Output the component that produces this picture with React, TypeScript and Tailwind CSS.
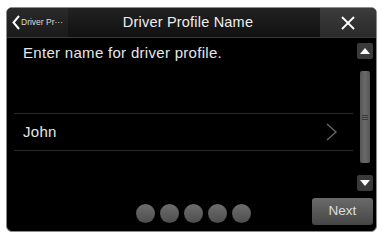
import { X } from "lucide-react";

function Triangle({ up }: { up?: boolean }) {
  return (
    <svg width="10" height="6" viewBox="0 0 10 6" className="block">
      {up ? <polygon points="0,6 10,6 5,0" fill="#fff" /> : <polygon points="0,0 10,0 5,6" fill="#fff" />}
    </svg>
  );
}

export default function App() {
  return (
    <div className="h-[234px] w-[382px] bg-white pl-[6px] pt-[7px] font-['Liberation_Sans',Arial,sans-serif]">
      <div className="flex h-[225px] w-[371px] flex-col overflow-hidden rounded-[6px] border border-[#8c8c8c] bg-black">
        {/* Header */}
        <div className="flex h-[30px] shrink-0 border-b border-[#3a3a3a] bg-gradient-to-b from-[#222] to-[#111]">
          <div className="flex w-[61px] items-center gap-[1px] bg-gradient-to-b from-[#2a2a2a] to-[#1a1a1a] pl-[5px]">
            <svg width="8" height="15" viewBox="0 0 8 15" className="shrink-0">
              <polyline points="7,1 1.5,7.5 7,14" fill="none" stroke="#fff" strokeWidth="2" />
            </svg>
            <span className="text-[8.5px] leading-none text-[#ddd]">Driver Pr···</span>
          </div>
          <div className="flex flex-1 items-center justify-center pr-[12px] text-[14.5px] tracking-[0.2px] text-[#eee]">
            Driver Profile Name
          </div>
          <div className="flex w-[56px] items-center justify-center bg-gradient-to-b from-[#3c3c3c] to-[#2a2a2a]">
            <X size={22} strokeWidth={2} color="#fff" />
          </div>
        </div>

        {/* Body */}
        <div className="flex h-[154px] shrink-0">
          <div className="ml-[7px] flex w-[339px] flex-col">
            <p className="pl-[9px] pt-[7px] text-[15px] leading-[16px] tracking-[0.3px] text-[#e6e6e6]">
              Enter name for driver profile.
            </p>
            <div className="mt-[52px] h-[1px] bg-[#2a2a2a]" />
            <div className="flex h-[36px] items-center justify-between pl-[9px] pr-[16px]">
              <span className="text-[15px] tracking-[0.3px] text-[#e6e6e6]">John</span>
              <svg width="11" height="18" viewBox="0 0 11 18">
                <polyline points="1,1 10,9 1,17" fill="none" stroke="#6a6a6a" strokeWidth="1.3" />
              </svg>
            </div>
            <div className="h-[1px] bg-[#2a2a2a]" />
          </div>
          <div className="ml-[4px] flex w-[16px] flex-col items-center">
            <div className="mt-[5px] flex h-[16px] w-[16px] items-center justify-center rounded-[2px] bg-[#3a3a3a]">
              <Triangle up />
            </div>
            <div className="mt-[12px] flex h-[92px] w-[10px] flex-col items-center justify-center gap-[1px] rounded-[2px] bg-gradient-to-r from-[#555] via-[#6a6a6a] to-[#555]">
              <div className="h-[1px] w-[6px] bg-[#3a3a3a]" />
              <div className="h-[1px] w-[6px] bg-[#3a3a3a]" />
              <div className="h-[1px] w-[6px] bg-[#3a3a3a]" />
            </div>
            <div className="mt-[12px] flex h-[16px] w-[16px] items-center justify-center rounded-[2px] bg-[#3a3a3a]">
              <Triangle />
            </div>
          </div>
        </div>

        {/* Footer */}
        <div className="grid flex-1 grid-cols-[1fr_auto_1fr] items-center">
          <div />
          <div className="ml-[3px] flex gap-[5px] pt-[4px]">
            {[0, 1, 2, 3, 4].map((i) => (
              <div key={i} className="h-[19px] w-[19px] rounded-full bg-gradient-to-b from-[#6e6e6e] to-[#4e4e4e]" />
            ))}
          </div>
          <div className="flex justify-end pr-[3px]">
            <div className="flex h-[27px] w-[61px] items-center justify-center rounded-[3px] bg-gradient-to-b from-[#6a6a6a] to-[#464646] text-[13.5px] text-[#ddd]">
              Next
            </div>
          </div>
        </div>
      </div>
    </div>
  );
}
